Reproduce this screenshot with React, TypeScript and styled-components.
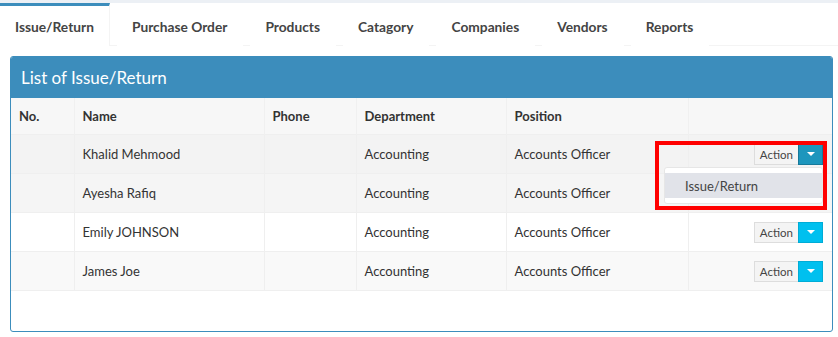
import styled, { createGlobalStyle } from 'styled-components';

const GlobalStyle = createGlobalStyle`
  html, body {
    margin: 0;
    padding: 0;
    background: #ecf0f5;
    font-family: Lato, "Open Sans", "Liberation Sans", sans-serif;
    color: #333;
  }
`;

const Page = styled.div`
  margin-top: 3px;
  background: #fff;
  height: 334px;
`;

const TabBar = styled.ul`
  display: flex;
  gap: 7px;
  margin: 0;
  padding: 0;
  list-style: none;
  border-bottom: 1px solid #f4f4f4;
`;

const Tab = styled.li<{ $active?: boolean }>`
  padding: 11px 15px 9px;
  line-height: 20px;
  font-size: 13.75px;
  font-weight: 700;
  color: #444;
  border-top: 3px solid ${(p) => (p.$active ? '#3c8dbc' : 'transparent')};
  border-right: 1px solid ${(p) => (p.$active ? '#f4f4f4' : 'transparent')};
  margin-bottom: -1px;
  background: #fff;
`;

const Box = styled.section`
  margin: 10px 5px 0 10px;
  border: 1px solid #3c8dbc;
  border-radius: 3px;
  height: 274px;
  overflow: hidden;
`;

const BoxHeader = styled.h3`
  margin: 0;
  height: 41px;
  padding: 0 10px;
  display: flex;
  align-items: center;
  background: #3c8dbc;
  color: #fff;
  font-size: 17px;
  font-weight: 400;
`;

const Table = styled.table`
  width: 100%;
  border-collapse: collapse;
  table-layout: fixed;
  font-size: 13px;
`;

const HeadCell = styled.th`
  height: 36px;
  padding: 0 8px;
  text-align: left;
  font-weight: 700;
  color: #333;
  background: #f7f7f7;
  border-left: 1px solid #f0f0f0;
  &:first-child {
    border-left: none;
  }
`;

const Row = styled.tr<{ $bg: string }>`
  background: ${(p) => p.$bg};
  border-top: 1px solid #efefef;
  border-bottom: 1px solid #efefef;
`;

const Cell = styled.td`
  height: 38px;
  padding: 0 8px;
  color: #333;
  border-left: 1px solid #efefef;
  &:first-child {
    border-left: none;
  }
`;

const ActionCell = styled(Cell)`
  padding-right: 9px;
  text-align: right;
  position: relative;
`;

const BtnGroup = styled.div`
  display: inline-flex;
  vertical-align: middle;
`;

const DefaultBtn = styled.span`
  box-sizing: border-box;
  height: 21px;
  padding: 0 5px;
  display: flex;
  align-items: center;
  font-size: 11.5px;
  color: #444;
  background: #f4f4f4;
  border: 1px solid #ddd;
  border-right: none;
`;

const CaretBtn = styled.span<{ $open?: boolean }>`
  box-sizing: border-box;
  width: 25px;
  height: 21px;
  display: flex;
  align-items: center;
  justify-content: center;
  background: ${(p) => (p.$open ? '#1d96bd' : '#00c0ef')};
  border: 1px solid ${(p) => (p.$open ? '#17799a' : '#00acd6')};
`;

const Caret = styled.span`
  width: 0;
  height: 0;
  border-left: 4px solid transparent;
  border-right: 4px solid transparent;
  border-top: 4px solid #fff;
`;

const Menu = styled.div`
  position: absolute;
  z-index: 2;
  top: 32px;
  right: 9px;
  width: 159px;
  box-sizing: border-box;
  padding: 5px 0 5px;
  background: #fff;
  border: 1px solid #e6e6e6;
  border-radius: 3px;
  text-align: left;
`;

const MenuItem = styled.div`
  height: 25px;
  padding: 0 20px;
  display: flex;
  align-items: center;
  background: #e1e3e9;
  color: #444;
  font-size: 13px;
`;

const Highlight = styled.div`
  position: absolute;
  z-index: 3;
  top: 6px;
  right: 5px;
  width: 172px;
  height: 69px;
  box-sizing: border-box;
  border: 4px solid #ff0000;
  pointer-events: none;
`;

const tabs = ['Issue/Return', 'Purchase Order', 'Products', 'Catagory', 'Companies', 'Vendors', 'Reports'];

const rows = [
  { name: 'Khalid Mehmood', bg: '#f3f3f3', open: true },
  { name: 'Ayesha Rafiq', bg: '#f5f5f5', hidden: true },
  { name: 'Emily JOHNSON', bg: '#ffffff' },
  { name: 'James Joe', bg: '#f9f9f9' },
];

const App = () => (
  <>
    <GlobalStyle />
    <Page>
      <TabBar>
        {tabs.map((t, i) => (
          <Tab key={t} $active={i === 0}>
            {t}
          </Tab>
        ))}
      </TabBar>
      <Box>
        <BoxHeader>List of Issue/Return</BoxHeader>
        <Table>
          <colgroup>
            <col style={{ width: 63 }} />
            <col style={{ width: 190 }} />
            <col style={{ width: 92 }} />
            <col style={{ width: 150 }} />
            <col style={{ width: 182 }} />
            <col />
          </colgroup>
          <thead>
            <tr>
              <HeadCell>No.</HeadCell>
              <HeadCell>Name</HeadCell>
              <HeadCell>Phone</HeadCell>
              <HeadCell>Department</HeadCell>
              <HeadCell>Position</HeadCell>
              <HeadCell />
            </tr>
          </thead>
          <tbody>
            {rows.map((r) => (
              <Row key={r.name} $bg={r.bg}>
                <Cell />
                <Cell>{r.name}</Cell>
                <Cell />
                <Cell>Accounting</Cell>
                <Cell>Accounts Officer</Cell>
                <ActionCell>
                  {!r.hidden && (
                    <BtnGroup>
                      <DefaultBtn>Action</DefaultBtn>
                      <CaretBtn $open={r.open}>
                        <Caret />
                      </CaretBtn>
                    </BtnGroup>
                  )}
                  {r.open && (
                    <>
                      <Menu>
                        <MenuItem>Issue/Return</MenuItem>
                      </Menu>
                      <Highlight />
                    </>
                  )}
                </ActionCell>
              </Row>
            ))}
          </tbody>
        </Table>
      </Box>
    </Page>
  </>
);

export default App;
